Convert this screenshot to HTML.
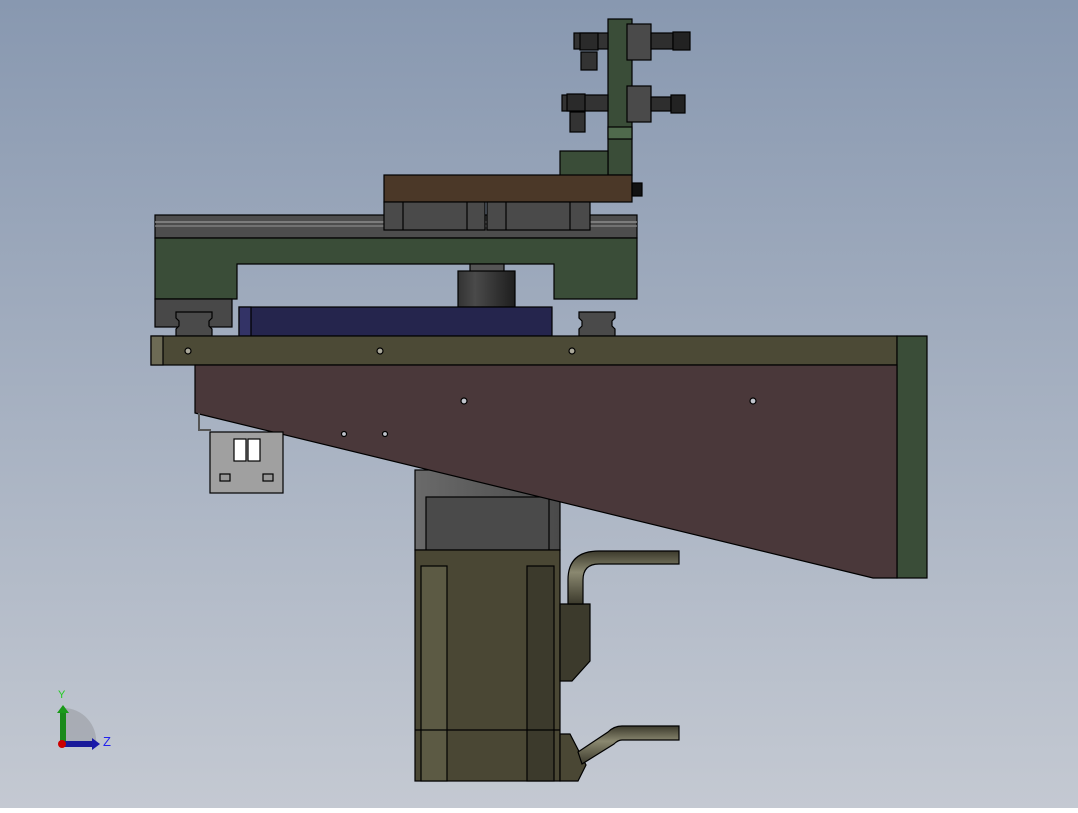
<!DOCTYPE html>
<html><head><style>html,body{margin:0;padding:0}body{width:1078px;height:808px;overflow:hidden}</style></head><body>
<svg width="1078" height="808" viewBox="0 0 1078 808" xmlns="http://www.w3.org/2000/svg">
<defs>
<linearGradient id="bg" x1="0" y1="0" x2="0" y2="1"><stop offset="0" stop-color="#8898b0"/><stop offset="1" stop-color="#c4c9d2"/></linearGradient>
<linearGradient id="cyl" x1="0" y1="0" x2="1" y2="0"><stop offset="0" stop-color="#333"/><stop offset=".3" stop-color="#4a4a4a"/><stop offset="1" stop-color="#1e1e1e"/></linearGradient>
<linearGradient id="pipeh" x1="0" y1="0" x2="0" y2="1"><stop offset="0" stop-color="#3c3a2c"/><stop offset=".4" stop-color="#8a8870"/><stop offset="1" stop-color="#3c3a2c"/></linearGradient>
<linearGradient id="pipev" x1="0" y1="0" x2="1" y2="0"><stop offset="0" stop-color="#3c3a2c"/><stop offset=".4" stop-color="#8a8870"/><stop offset="1" stop-color="#3c3a2c"/></linearGradient>
<linearGradient id="mtop" x1="0" y1="0" x2="1" y2="0"><stop offset="0" stop-color="#6a6a6a"/><stop offset="1" stop-color="#4a4a4a"/></linearGradient>
</defs>
<rect width="1078" height="808" fill="url(#bg)"/>
<g stroke="#000" stroke-width="1.2">
<!-- vertical bracket -->
<rect x="608" y="19" width="24" height="156" fill="#3a4d38"/>
<rect x="608" y="127" width="24" height="12" fill="#4f6a4c"/>
<rect x="560" y="151" width="48" height="25" fill="#3a4d38"/>
<rect x="627" y="24" width="24" height="36" fill="#4a4a4a"/>
<rect x="627" y="86" width="24" height="36" fill="#4a4a4a"/>
<!-- fittings -->
<rect x="651" y="33" width="22" height="16" fill="#2e2e2e"/><rect x="673" y="32" width="17" height="18" fill="#222"/>
<rect x="651" y="97" width="20" height="14" fill="#2e2e2e"/><rect x="671" y="95" width="14" height="18" fill="#222"/>
<rect x="574" y="33" width="34" height="16" fill="#333"/><rect x="580" y="33" width="18" height="17" fill="#2a2a2a"/>
<rect x="581" y="52" width="16" height="18" fill="#333"/>
<rect x="562" y="95" width="46" height="16" fill="#333"/><rect x="567" y="94" width="18" height="17" fill="#2a2a2a"/>
<rect x="570" y="112" width="15" height="20" fill="#333"/>
<!-- rail -->
<rect x="155" y="215" width="482" height="23" fill="#4d4d4d"/>
<line x1="155" y1="222" x2="637" y2="222" stroke="#999"/>
<line x1="155" y1="226" x2="637" y2="226" stroke="#888"/>
<!-- green frame -->
<path d="M155 238H637V299H554V264H237V299H155Z" fill="#3a4d38"/>
<!-- brown plate + carriage -->
<rect x="384" y="175" width="248" height="27" fill="#4b3828"/>
<rect x="632" y="183" width="10" height="13" fill="#111"/>
<rect x="384" y="202" width="101" height="28" fill="#4a4a4a"/>
<rect x="487" y="202" width="103" height="28" fill="#4a4a4a"/>
<line x1="403" y1="202" x2="403" y2="230"/><line x1="467" y1="202" x2="467" y2="230"/>
<line x1="506" y1="202" x2="506" y2="230"/><line x1="570" y1="202" x2="570" y2="230"/>
<!-- coupling -->
<rect x="470" y="264" width="34" height="8" fill="#555"/>
<rect x="458" y="271" width="57" height="36" fill="url(#cyl)"/>
<!-- rail blocks -->
<rect x="155" y="299" width="77" height="28" fill="#484848"/>
<path d="M176 312H212V318l-3 3v5l3 3V336H176V329l3-3V321l-3-3Z" fill="#4a4a4a"/>
<path d="M579 312H615V318l-3 3v5l3 3V336H579V329l3-3V321l-3-3Z" fill="#4a4a4a"/>
<!-- blue -->
<rect x="239" y="307" width="313" height="29" fill="#25254d"/>
<rect x="239" y="307" width="12" height="29" fill="#333366"/>
<!-- beam -->
<rect x="151" y="336" width="746" height="29" fill="#4c4a36"/>
<rect x="151" y="336" width="12" height="29" fill="#6d6b55"/>
<rect x="897" y="336" width="30" height="242" fill="#3a4d38"/>
<circle cx="188" cy="351" r="3" fill="#aaa89a"/><circle cx="380" cy="351" r="3" fill="#aaa89a"/><circle cx="572" cy="351" r="3" fill="#aaa89a"/>
<!-- motor top -->
<rect x="415" y="470" width="145" height="80" fill="url(#mtop)"/>
<rect x="426" y="497" width="123" height="53" fill="#4a4a4a"/>
<!-- triangle -->
<path d="M195 365H897V578H873L195 413Z" fill="#4a383a"/>
<circle cx="464" cy="401" r="3" fill="#c0c4cc"/><circle cx="753" cy="401" r="3" fill="#c0c4cc"/>
<circle cx="344" cy="434" r="2.5" fill="#c0c4cc"/><circle cx="385" cy="434" r="2.5" fill="#c0c4cc"/>
<!-- grey box -->
<path d="M199 413V430h12" fill="none" stroke="#555" stroke-width="2"/>
<rect x="210" y="432" width="73" height="61" fill="#a0a0a0"/>
<rect x="234" y="439" width="12" height="22" fill="#fff"/><rect x="248" y="439" width="12" height="22" fill="#fff"/>
<rect x="220" y="474" width="10" height="7" fill="#999"/><rect x="263" y="474" width="10" height="7" fill="#999"/>
<!-- motor body -->
<rect x="415" y="550" width="145" height="231" fill="#4a4734"/>
<rect x="421" y="566" width="26" height="215" fill="#5c5a44"/>
<rect x="527" y="566" width="27" height="215" fill="#3c3a2c"/>
<line x1="415" y1="730" x2="560" y2="730"/>
<path d="M560 734h10l16 31-8 16H560Z" fill="#4a4734"/>
<path d="M560 604h30v57l-18 20H560Z" fill="#3c3a2c"/>
<!-- pipes -->
<path d="M568 604V580q0-29 31-29H679V564H599q-16 0-16 16V604Z" fill="url(#pipeh)"/>
<path d="M578 752l30-20q6-6 14-6H679V740H622q-4 0-8 4l-32 20Z" fill="url(#pipeh)"/>
</g>
<!-- axis -->
<path d="M63 744V708A33 33 0 0 1 96 744Z" fill="#9a9da4" opacity=".6"/>
<rect x="60" y="711" width="6" height="33" fill="#1a8a1a"/><path d="M57 713l6-8 6 8Z" fill="#1a9a1a"/>
<rect x="63" y="741" width="30" height="6" fill="#1a1a9a"/><path d="M92 738l8 6-8 6Z" fill="#1a1aaa"/>
<circle cx="62" cy="744" r="4" fill="#c00"/>
<text x="58" y="698" font-family="Liberation Sans, sans-serif" font-size="11" fill="#2c2">Y</text>
<text x="103" y="746" font-family="Liberation Sans, sans-serif" font-size="13" fill="#22e">Z</text>
</svg>
</body></html>
